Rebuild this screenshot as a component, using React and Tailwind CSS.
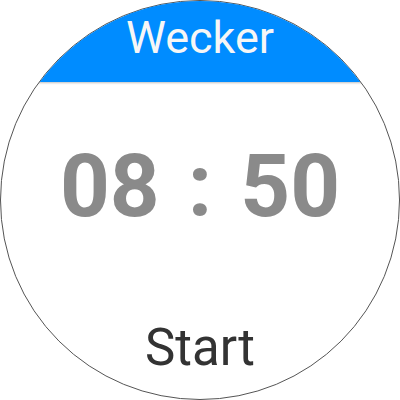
export default function App() {
  return (
    <div className="w-[400px] h-[400px] bg-white" style={{ fontFamily: 'Roboto, "Liberation Sans", sans-serif' }}>
      <div className="w-[400px] h-[400px] rounded-full border border-[#555] overflow-hidden flex flex-col bg-white">
        <div className="h-[81px] shrink-0 bg-[#008cff] flex justify-center shadow-[0_1px_2px_rgba(0,0,0,0.25)]">
          <span className="text-[45px] leading-none text-[#f6f6f6] mt-[14px]">Wecker</span>
        </div>
        <div className="flex justify-center items-center gap-[28px] mt-[61px] text-[87px] leading-none font-bold text-[#8a8a8a]">
          <span>08</span>
          <span>:</span>
          <span>50</span>
        </div>
        <div className="flex justify-center mt-[92px]">
          <span className="text-[51px] leading-none text-[#333]">Start</span>
        </div>
      </div>
    </div>
  );
}
